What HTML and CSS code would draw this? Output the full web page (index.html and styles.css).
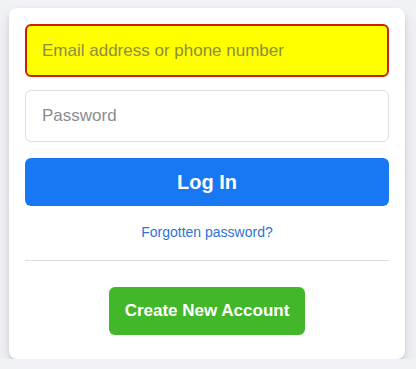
FILE: index.html
```html
<!DOCTYPE html>
<html>
<head>
<meta charset="utf-8">
<link rel="stylesheet" href="styles.css">
</head>
<body>
<div class="card">
  <form class="form">
    <input class="field field-error" type="text" placeholder="Email address or phone number">
    <input class="field" type="password" placeholder="Password">
    <button class="login" type="button">Log In</button>
  </form>
  <div class="forgot"><a href="#">Forgotten password?</a></div>
  <div class="divider"></div>
  <div class="create-wrap"><button class="create" type="button">Create New Account</button></div>
</div>
</body>
</html>
```
FILE: styles.css
```css
html, body {
  margin: 0;
  padding: 0;
  background: #f0f2f5;
  font-family: "Liberation Sans", Arial, sans-serif;
}
body {
  padding: 8px 11px 0 9px;
}
.card {
  width: 396px;
  box-sizing: border-box;
  background: #fff;
  border-radius: 8px;
  box-shadow: 0 2px 4px rgba(0,0,0,.1), 0 8px 16px rgba(0,0,0,.1);
  padding: 16px 16px 24px;
}
.form {
  display: flex;
  flex-direction: column;
  margin: 0;
}
.field {
  height: 52px;
  box-sizing: border-box;
  border: 1px solid #dddfe2;
  border-radius: 6px;
  padding: 0 16px;
  font-family: inherit;
  font-size: 17px;
  color: #1d2129;
  background: #fff;
  outline: none;
  margin-bottom: 13px;
}
.field::placeholder {
  color: #8a8d91;
}
.field-error {
  height: 53px;
  background: #ffff00;
  border: 2px solid #cc1f00;
  padding: 0 15px;
}
.field-error::placeholder {
  color: #8d8d40;
}
.login {
  margin-top: 3px;
  height: 48px;
  border: none;
  border-radius: 6px;
  background: #1877f2;
  color: #fff;
  font-family: inherit;
  font-size: 20px;
  font-weight: bold;
}
.forgot {
  text-align: center;
  margin-top: 16px;
  line-height: 19px;
}
.forgot a {
  color: #2f72d8;
  font-size: 14px;
  text-decoration: none;
}
.divider {
  border-bottom: 1px solid #dadde1;
  margin: 18px 0 26px;
}
.create-wrap {
  display: flex;
  justify-content: center;
}
.create {
  height: 48px;
  padding: 0 16px;
  border: none;
  border-radius: 6px;
  background: #42b72a;
  color: #fff;
  font-family: inherit;
  font-size: 17px;
  font-weight: bold;
}
```
